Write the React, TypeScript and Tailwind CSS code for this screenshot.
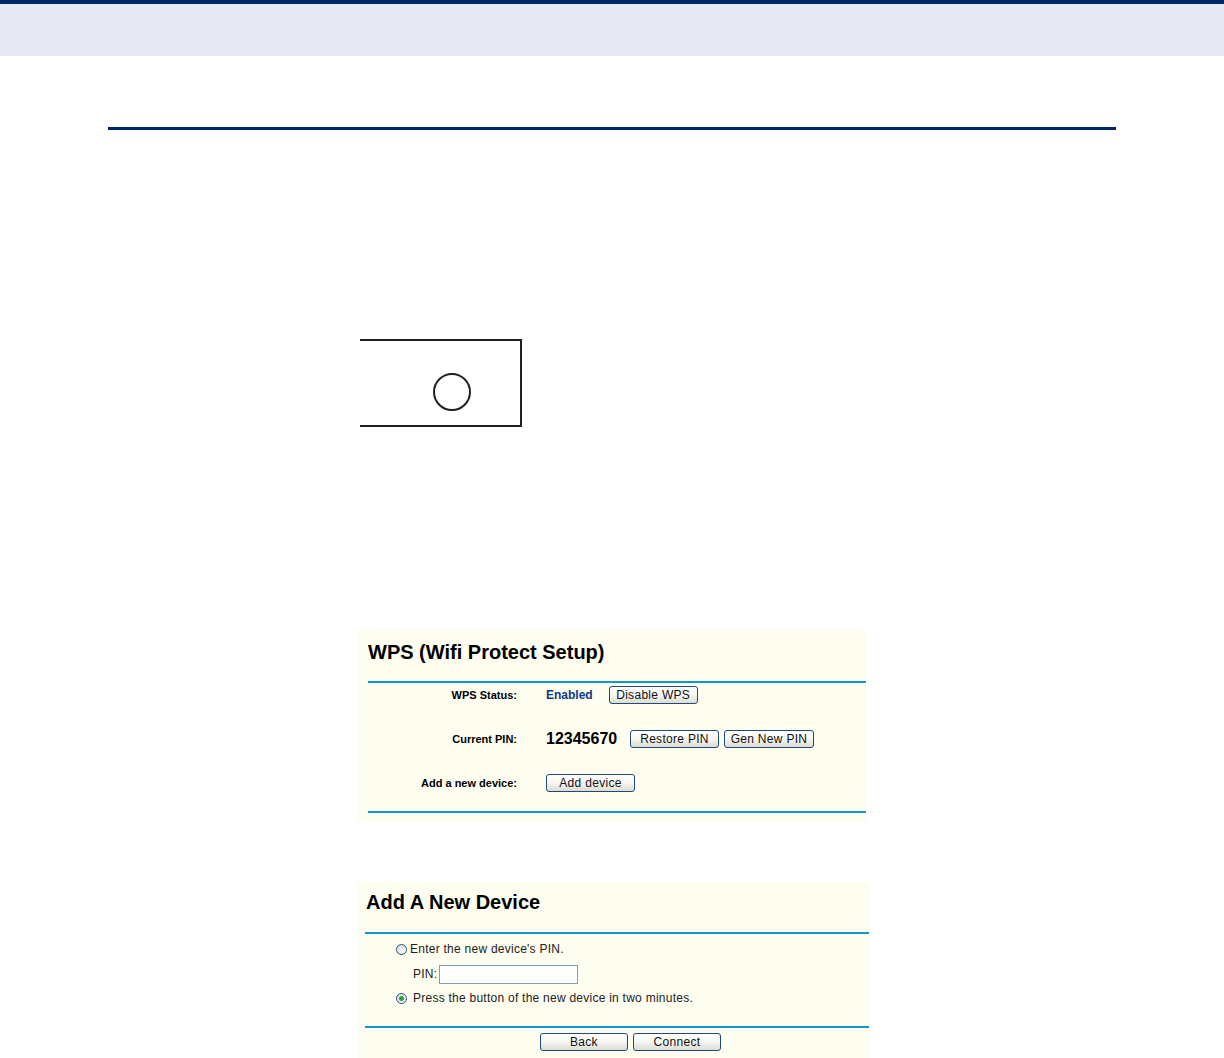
import { ReactNode } from 'react'

const cream = 'bg-[#fdfdf0]'

function XpButton({ children, width }: { children: ReactNode; width: string }) {
  return (
    <button
      className={`${width} h-[18px] rounded-[3px] border border-[#1f4a7a] bg-gradient-to-b from-white via-[#f6f6f3] to-[#dcdcd4] text-[12px] leading-[16px] tracking-[0.3px] text-[#111] flex items-center justify-center`}
    >
      {children}
    </button>
  )
}

function Radio({ checked }: { checked?: boolean }) {
  return (
    <span className="w-[11px] h-[11px] rounded-full border border-[#1c5180] bg-gradient-to-br from-[#dcdcd6] to-white flex items-center justify-center shrink-0">
      {checked && <span className="w-[5px] h-[5px] rounded-full bg-[#27a53a]" />}
    </span>
  )
}

export default function App() {
  return (
    <div className="min-h-[1058px] h-[1058px] overflow-hidden bg-white" style={{ fontFamily: '"Liberation Sans", Arial, sans-serif' }}>
      {/* Header band */}
      <header className="h-[56px] border-t-4 border-[#002663] bg-[#e6e9f2]" />

      {/* Rule */}
      <div className="mt-[71px] ml-[108px] w-[1008px] h-[3px] bg-[#002663]" />

      {/* Button diagram */}
      <div className="mt-[209px] ml-[360px] w-[162px] h-[88px] border-y-2 border-r-2 border-[#231f20] pl-[73px] pt-[32px]">
        <div className="w-[38px] h-[38px] rounded-full border-2 border-[#231f20]" />
      </div>

      {/* WPS panel */}
      <section className={`mt-[203px] ml-[358px] w-[508px] h-[192px] ${cream}`}>
        <h2 className="pt-[10px] pl-[10px] h-[51px] text-[20px] leading-[24px] font-bold text-black">WPS (Wifi Protect Setup)</h2>
        <div className="ml-[10px] h-[2px] bg-[#0f98cd]" />
        <div className="-mt-[10px] grid grid-cols-[159px_1fr] gap-x-[29px] items-center text-[11px] font-bold">
          <div className="h-[44px] flex items-center justify-end">WPS Status:</div>
          <div className="h-[44px] flex items-center gap-[16px]">
            <span className="text-[12px] text-[#0b3a8c]">Enabled</span>
            <XpButton width="w-[89px]">
              <span className="font-normal">Disable WPS</span>
            </XpButton>
          </div>
          <div className="h-[44px] flex items-center justify-end">Current PIN:</div>
          <div className="h-[44px] flex items-center">
            <span className="text-[16px] w-[84px]">12345670</span>
            <XpButton width="w-[89px]">
              <span className="font-normal">Restore PIN</span>
            </XpButton>
            <span className="w-[5px]" />
            <XpButton width="w-[90px]">
              <span className="font-normal">Gen New PIN</span>
            </XpButton>
          </div>
          <div className="h-[44px] flex items-center justify-end">Add a new device:</div>
          <div className="h-[44px] flex items-center">
            <XpButton width="w-[89px]">
              <span className="font-normal">Add device</span>
            </XpButton>
          </div>
        </div>
        <div className="mt-[6px] ml-[10px] h-[2px] bg-[#0f98cd]" />
      </section>

      {/* Add a new device panel */}
      <section className={`mt-[60px] ml-[358px] w-[512px] h-[176px] ${cream}`}>
        <h2 className="pt-[8px] pl-[8px] h-[50px] text-[20px] leading-[24px] font-bold text-black">Add A New Device</h2>
        <div className="ml-[7px] w-[504px] h-[2px] bg-[#0f98cd]" />
        <div className="pl-[38px] pt-[7px] text-[12px] tracking-[0.25px] text-[#222] h-[92px]">
          <div className="h-[16px] flex items-center gap-[3px]">
            <Radio />
            <span>Enter the new device's PIN.</span>
          </div>
          <div className="mt-[7px] h-[20px] flex items-center pl-[17px] gap-[2px]">
            <span>PIN:</span>
            <span className="w-[139px] h-[19px] border border-[#7f9db9] bg-white" />
          </div>
          <div className="mt-[6px] h-[16px] flex items-center gap-[6px]">
            <Radio checked />
            <span>Press the button of the new device in two minutes.</span>
          </div>
        </div>
        <div className="ml-[7px] w-[504px] h-[2px] bg-[#0f98cd]" />
        <div className="mt-[5px] pl-[182px] flex gap-[5px]">
          <XpButton width="w-[88px]">Back</XpButton>
          <XpButton width="w-[88px]">Connect</XpButton>
        </div>
      </section>
    </div>
  )
}
